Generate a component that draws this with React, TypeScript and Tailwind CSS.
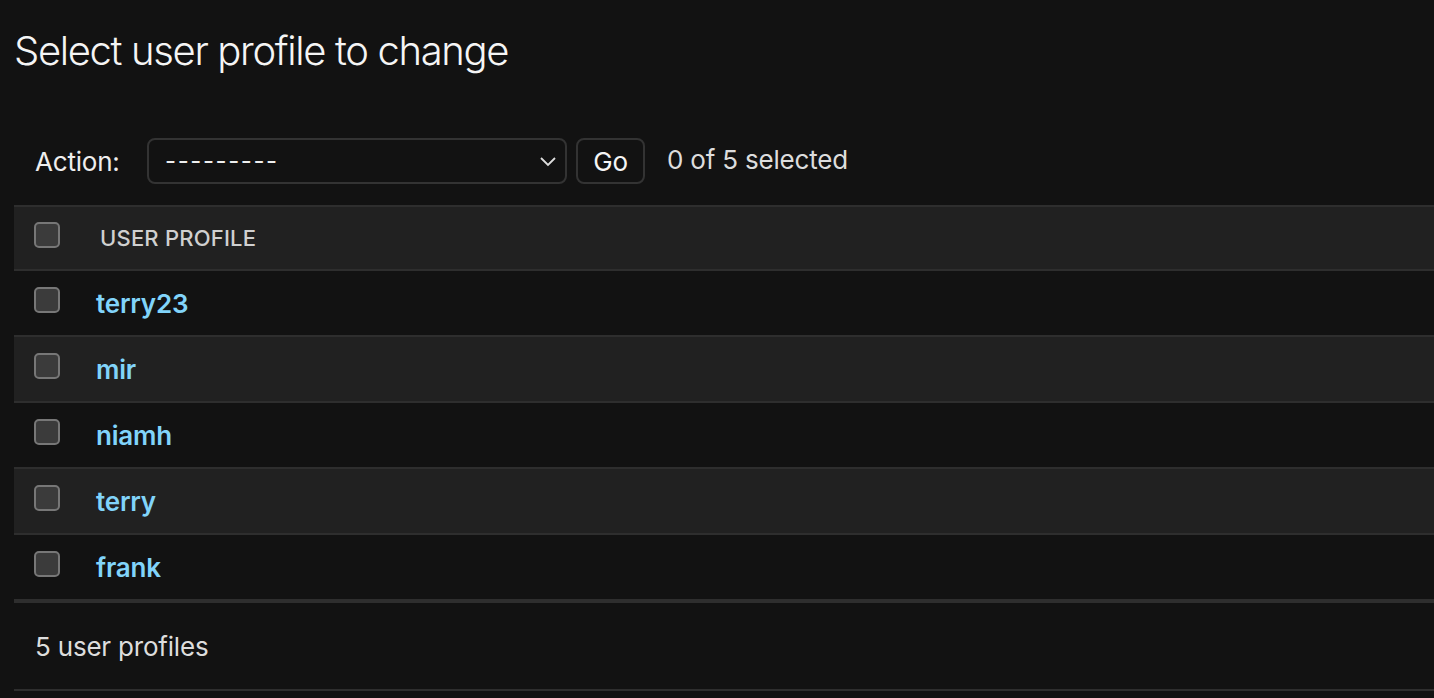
const rows = ["terry23", "mir", "niamh", "terry", "frank"]

function Checkbox() {
  return (
    <span className="mb-[6px] block h-[26px] w-[26px] shrink-0 rounded-[5px] border-2 border-[#777] bg-[#3b3b3b]" />
  )
}

export default function App() {
  return (
    <div className="min-h-[698px] bg-[#121212] pl-[14px] font-['Inter',sans-serif] text-[#eeeeee]">
      <h1 className="pt-[27px] text-[40px] font-light leading-[48px] tracking-[-1.35px] text-[#f5f5f5]">
        Select user profile to change
      </h1>

      {/* Actions */}
      <div className="mt-[63px] flex h-[46px] items-center pl-[21px] text-[26px] tracking-[-0.2px]">
        <span className="w-[112px]">Action:</span>
        <div className="flex h-[46px] w-[420px] items-center justify-between rounded-[8px] border-2 border-[#333] pl-[16px] pr-[8px]">
          <span className="text-[24px] leading-none tracking-[1.6px]">---------</span>
          <svg width="18" height="12" viewBox="0 0 18 12" fill="none" stroke="#ddd" strokeWidth="1.8">
            <path d="M2 3l7 7 7-7" />
          </svg>
        </div>
        <button className="ml-[9px] h-[46px] w-[69px] rounded-[8px] border-2 border-[#333] text-[26px] text-[#f5f5f5]">
          Go
        </button>
        <span className="mb-[4px] ml-[22px] text-[#ddd]">0 of 5 selected</span>
      </div>

      {/* Table */}
      <div className="mt-[21px]">
        <div className="flex h-[66px] items-center border-y-2 border-[#2e2e2e] bg-[#212121] pl-[20px]">
          <Checkbox />
          <span className="ml-[40px] text-[22px] font-medium tracking-[0.2px] text-[#d0d0d0]">USER PROFILE</span>
        </div>
        {rows.map((name, i) => (
          <div
            key={name}
            className={`flex h-[66px] items-center border-b-2 border-[#2e2e2e] pl-[20px] ${i % 2 === 1 ? "bg-[#212121]" : "bg-[#121212]"}`}
          >
            <Checkbox />
            <a href="#" className="ml-[36px] text-[26px] font-semibold tracking-[-0.2px] text-[#81d4fa]">
              {name}
            </a>
          </div>
        ))}
        <div className="flex h-[90px] items-center border-b-2 border-t-2 border-[#2e2e2e] pl-[21px] text-[26px] tracking-[-0.2px] text-[#ddd]">
          5 user profiles
        </div>
      </div>
    </div>
  )
}
